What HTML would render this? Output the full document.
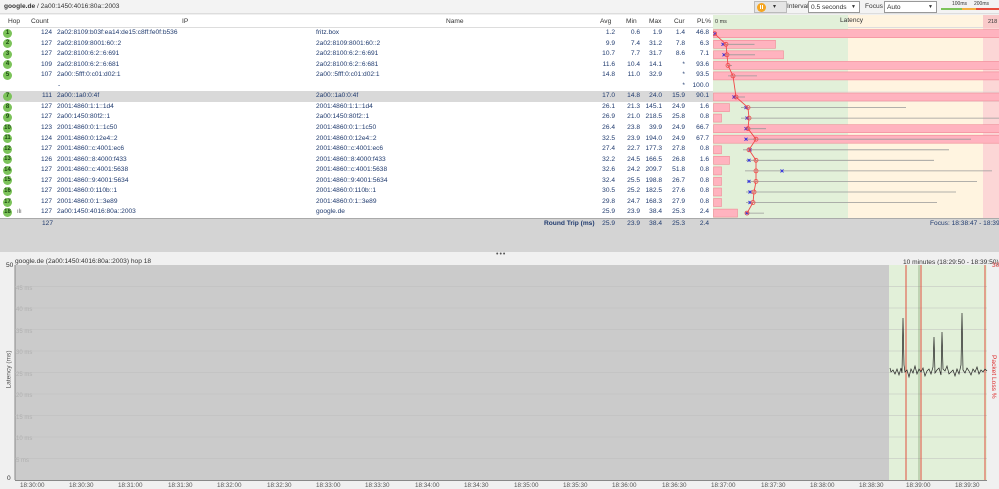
<!DOCTYPE html>
<html><head><meta charset="utf-8">
<style>
*{margin:0;padding:0;box-sizing:border-box}
body{width:999px;height:489px;overflow:hidden;background:#f0f0f0;font-family:"Liberation Sans",sans-serif;font-size:6.6px;color:#1f3a6e;position:relative}
.a{position:absolute;white-space:nowrap}
.top{left:0;top:0;width:999px;height:14px;background:#f3f3f3;border-bottom:1px solid #ddd}
.hdr{left:0;top:15px;width:713px;height:13px;background:#fff;border-bottom:1px solid #ddd;color:#333}
.hdr span{position:absolute;top:3px}
.tbl{left:0;top:28px;width:713px;height:190px;background:#fff}
.r{position:absolute;left:0;width:713px;height:10.55px;line-height:10.55px}
.r span{position:absolute}
.hop{left:3px;top:0.8px;width:9px;height:9px;border-radius:50%;background:#7cc35a;color:#1b4a10;text-align:center;line-height:9px;font-size:6px;font-weight:bold}
.n{text-align:right}
</style></head><body>
<div class="a top"></div>
<div class="a" style="left:4px;top:3px;color:#333"><b>google.de</b> / 2a00:1450:4016:80a::2003</div>
<div class="a" style="left:754px;top:1px;width:33px;height:12px;border:1px solid #bbb;background:#e5e5e5"></div>
<div class="a" style="left:757px;top:2.5px;width:9px;height:9px;border-radius:50%;background:#f5a623"></div>
<div class="a" style="left:760px;top:5px;width:1px;height:4px;background:#fff"></div><div class="a" style="left:762px;top:5px;width:1px;height:4px;background:#fff"></div>
<div class="a" style="left:773px;top:3px;font-size:6px;color:#333">▾</div>
<div class="a" style="left:787px;top:3px;color:#333">Interval</div>
<div class="a" style="left:808px;top:1px;width:52px;height:12px;border:1px solid #999;background:#fff;color:#333;padding:2px 2px">0.5 seconds<span style="position:absolute;right:3px;font-size:5px">▼</span></div>
<div class="a" style="left:865px;top:3px;color:#333">Focus</div>
<div class="a" style="left:884px;top:1px;width:53px;height:12px;border:1px solid #999;background:#fff;color:#333;padding:2px 2px">Auto<span style="position:absolute;right:3px;font-size:5px">▼</span></div>
<div class="a" style="left:952px;top:1px;font-size:5px;color:#333">100ms</div><div class="a" style="left:974px;top:1px;font-size:5px;color:#333">200ms</div>
<div class="a" style="left:941px;top:8px;width:21px;height:2px;background:#7cc35a"></div>
<div class="a" style="left:962px;top:8px;width:14px;height:2px;background:#f5b041"></div>
<div class="a" style="left:976px;top:8px;width:23px;height:2px;background:#e74c3c"></div>

<div class="a hdr"><span style="left:8px">Hop</span><span style="left:31px">Count</span><span style="left:182px">IP</span><span style="left:446px">Name</span><span style="left:600px">Avg</span><span style="left:626px">Min</span><span style="left:649px">Max</span><span style="left:674px">Cur</span><span style="left:697px">PL%</span></div>
<div class="a" style="left:713px;top:15px;width:286px;height:13px;background:#fff4e0;border-bottom:1px solid #ddd"></div>
<div class="a" style="left:713px;top:15px;width:135px;height:13px;background:#e2f0d9"></div>
<div class="a" style="left:983px;top:15px;width:16px;height:13px;background:#f9c9c9"></div>
<div class="a" style="left:715px;top:19px;font-size:5.5px;color:#333">0 ms</div>
<div class="a" style="left:840px;top:17px;color:#333">Latency</div>
<div class="a" style="left:988px;top:19px;font-size:5.5px;color:#333">218</div>

<div class="a tbl">
<div class="r" style="top:0"><span class="hop">1</span><span class="n" style="left:30px;width:22px">124</span><span style="left:57px">2a02:8109:b03f:ea14:de15:c8ff:fe0f:b536</span><span style="left:316px">fritz.box</span><span class="n" style="left:595px;width:20px">1.2</span><span class="n" style="left:620px;width:20px">0.6</span><span class="n" style="left:642px;width:20px">1.9</span><span class="n" style="left:665px;width:20px">1.4</span><span class="n" style="left:689px;width:20px">46.8</span></div>
<div class="r" style="top:10.55px"><span class="hop">2</span><span class="n" style="left:30px;width:22px">127</span><span style="left:57px">2a02:8109:8001:60::2</span><span style="left:316px">2a02:8109:8001:60::2</span><span class="n" style="left:595px;width:20px">9.9</span><span class="n" style="left:620px;width:20px">7.4</span><span class="n" style="left:642px;width:20px">31.2</span><span class="n" style="left:665px;width:20px">7.8</span><span class="n" style="left:689px;width:20px">6.3</span></div>
<div class="r" style="top:21.1px"><span class="hop">3</span><span class="n" style="left:30px;width:22px">127</span><span style="left:57px">2a02:8100:6:2::6:691</span><span style="left:316px">2a02:8100:6:2::6:691</span><span class="n" style="left:595px;width:20px">10.7</span><span class="n" style="left:620px;width:20px">7.7</span><span class="n" style="left:642px;width:20px">31.7</span><span class="n" style="left:665px;width:20px">8.6</span><span class="n" style="left:689px;width:20px">7.1</span></div>
<div class="r" style="top:31.65px"><span class="hop">4</span><span class="n" style="left:30px;width:22px">109</span><span style="left:57px">2a02:8100:6:2::6:681</span><span style="left:316px">2a02:8100:6:2::6:681</span><span class="n" style="left:595px;width:20px">11.6</span><span class="n" style="left:620px;width:20px">10.4</span><span class="n" style="left:642px;width:20px">14.1</span><span class="n" style="left:665px;width:20px">*</span><span class="n" style="left:689px;width:20px">93.6</span></div>
<div class="r" style="top:42.2px"><span class="hop">5</span><span class="n" style="left:30px;width:22px">107</span><span style="left:57px">2a00::5fff:0:c01:d02:1</span><span style="left:316px">2a00::5fff:0:c01:d02:1</span><span class="n" style="left:595px;width:20px">14.8</span><span class="n" style="left:620px;width:20px">11.0</span><span class="n" style="left:642px;width:20px">32.9</span><span class="n" style="left:665px;width:20px">*</span><span class="n" style="left:689px;width:20px">93.5</span></div>
<div class="r" style="top:52.75px"><span style="left:58px">-</span><span class="n" style="left:665px;width:20px">*</span><span class="n" style="left:689px;width:20px">100.0</span></div>
<div class="r" style="top:63.3px;background:#d9d9d9"><span class="hop">7</span><span class="n" style="left:30px;width:22px">111</span><span style="left:57px">2a00::1a0:0:4f</span><span style="left:316px">2a00::1a0:0:4f</span><span class="n" style="left:595px;width:20px">17.0</span><span class="n" style="left:620px;width:20px">14.8</span><span class="n" style="left:642px;width:20px">24.0</span><span class="n" style="left:665px;width:20px">15.9</span><span class="n" style="left:689px;width:20px">90.1</span></div>
<div class="r" style="top:73.85px"><span class="hop">8</span><span class="n" style="left:30px;width:22px">127</span><span style="left:57px">2001:4860:1:1::1d4</span><span style="left:316px">2001:4860:1:1::1d4</span><span class="n" style="left:595px;width:20px">26.1</span><span class="n" style="left:620px;width:20px">21.3</span><span class="n" style="left:642px;width:20px">145.1</span><span class="n" style="left:665px;width:20px">24.9</span><span class="n" style="left:689px;width:20px">1.6</span></div>
<div class="r" style="top:84.4px"><span class="hop">9</span><span class="n" style="left:30px;width:22px">127</span><span style="left:57px">2a00:1450:80f2::1</span><span style="left:316px">2a00:1450:80f2::1</span><span class="n" style="left:595px;width:20px">26.9</span><span class="n" style="left:620px;width:20px">21.0</span><span class="n" style="left:642px;width:20px">218.5</span><span class="n" style="left:665px;width:20px">25.8</span><span class="n" style="left:689px;width:20px">0.8</span></div>
<div class="r" style="top:94.95px"><span class="hop">10</span><span class="n" style="left:30px;width:22px">123</span><span style="left:57px">2001:4860:0:1::1c50</span><span style="left:316px">2001:4860:0:1::1c50</span><span class="n" style="left:595px;width:20px">26.4</span><span class="n" style="left:620px;width:20px">23.8</span><span class="n" style="left:642px;width:20px">39.9</span><span class="n" style="left:665px;width:20px">24.9</span><span class="n" style="left:689px;width:20px">66.7</span></div>
<div class="r" style="top:105.5px"><span class="hop">11</span><span class="n" style="left:30px;width:22px">124</span><span style="left:57px">2001:4860:0:12e4::2</span><span style="left:316px">2001:4860:0:12e4::2</span><span class="n" style="left:595px;width:20px">32.5</span><span class="n" style="left:620px;width:20px">23.9</span><span class="n" style="left:642px;width:20px">194.0</span><span class="n" style="left:665px;width:20px">24.9</span><span class="n" style="left:689px;width:20px">67.7</span></div>
<div class="r" style="top:116.05px"><span class="hop">12</span><span class="n" style="left:30px;width:22px">127</span><span style="left:57px">2001:4860::c:4001:ec6</span><span style="left:316px">2001:4860::c:4001:ec6</span><span class="n" style="left:595px;width:20px">27.4</span><span class="n" style="left:620px;width:20px">22.7</span><span class="n" style="left:642px;width:20px">177.3</span><span class="n" style="left:665px;width:20px">27.8</span><span class="n" style="left:689px;width:20px">0.8</span></div>
<div class="r" style="top:126.6px"><span class="hop">13</span><span class="n" style="left:30px;width:22px">126</span><span style="left:57px">2001:4860::8:4000:f433</span><span style="left:316px">2001:4860::8:4000:f433</span><span class="n" style="left:595px;width:20px">32.2</span><span class="n" style="left:620px;width:20px">24.5</span><span class="n" style="left:642px;width:20px">166.5</span><span class="n" style="left:665px;width:20px">26.8</span><span class="n" style="left:689px;width:20px">1.6</span></div>
<div class="r" style="top:137.15px"><span class="hop">14</span><span class="n" style="left:30px;width:22px">127</span><span style="left:57px">2001:4860::c:4001:5638</span><span style="left:316px">2001:4860::c:4001:5638</span><span class="n" style="left:595px;width:20px">32.6</span><span class="n" style="left:620px;width:20px">24.2</span><span class="n" style="left:642px;width:20px">209.7</span><span class="n" style="left:665px;width:20px">51.8</span><span class="n" style="left:689px;width:20px">0.8</span></div>
<div class="r" style="top:147.7px"><span class="hop">15</span><span class="n" style="left:30px;width:22px">127</span><span style="left:57px">2001:4860::9:4001:5634</span><span style="left:316px">2001:4860::9:4001:5634</span><span class="n" style="left:595px;width:20px">32.4</span><span class="n" style="left:620px;width:20px">25.5</span><span class="n" style="left:642px;width:20px">198.8</span><span class="n" style="left:665px;width:20px">26.7</span><span class="n" style="left:689px;width:20px">0.8</span></div>
<div class="r" style="top:158.25px"><span class="hop">16</span><span class="n" style="left:30px;width:22px">127</span><span style="left:57px">2001:4860:0:110b::1</span><span style="left:316px">2001:4860:0:110b::1</span><span class="n" style="left:595px;width:20px">30.5</span><span class="n" style="left:620px;width:20px">25.2</span><span class="n" style="left:642px;width:20px">182.5</span><span class="n" style="left:665px;width:20px">27.6</span><span class="n" style="left:689px;width:20px">0.8</span></div>
<div class="r" style="top:168.8px"><span class="hop">17</span><span class="n" style="left:30px;width:22px">127</span><span style="left:57px">2001:4860:0:1::3e89</span><span style="left:316px">2001:4860:0:1::3e89</span><span class="n" style="left:595px;width:20px">29.8</span><span class="n" style="left:620px;width:20px">24.7</span><span class="n" style="left:642px;width:20px">168.3</span><span class="n" style="left:665px;width:20px">27.9</span><span class="n" style="left:689px;width:20px">0.8</span></div>
<div class="r" style="top:179.35px"><span class="hop">18</span><span style="left:17px;color:#555;font-size:6px">ılı</span><span class="n" style="left:30px;width:22px">127</span><span style="left:57px">2a00:1450:4016:80a::2003</span><span style="left:316px">google.de</span><span class="n" style="left:595px;width:20px">25.9</span><span class="n" style="left:620px;width:20px">23.9</span><span class="n" style="left:642px;width:20px">38.4</span><span class="n" style="left:665px;width:20px">25.3</span><span class="n" style="left:689px;width:20px">2.4</span></div>
</div>

<svg class="a" style="left:713px;top:28px" width="286" height="190" viewBox="713 28 286 190">
<rect x="713" y="28" width="135" height="190" fill="#e2f0d9"/>
<rect x="848" y="28" width="135" height="190" fill="#fff4e0"/>
<rect x="983" y="28" width="16" height="190" fill="#fcd6d6"/>
<rect x="713" y="91.3" width="286" height="10.55" fill="#d9d9d9" opacity=".5"/>
<g fill="#ffb3bf" stroke="#f08a96" stroke-width=".6">
<rect x="713.5" y="29.7" width="290" height="8"/>
<rect x="713.5" y="40.3" width="62" height="8"/>
<rect x="713.5" y="50.8" width="70" height="8"/>
<rect x="713.5" y="61.4" width="290" height="8"/>
<rect x="713.5" y="71.9" width="290" height="8"/>
<rect x="713.5" y="93" width="290" height="8"/>
<rect x="713.5" y="103.6" width="16" height="8"/>
<rect x="713.5" y="114.1" width="8" height="8"/>
<rect x="713.5" y="124.7" width="290" height="8"/>
<rect x="713.5" y="135.2" width="290" height="8"/>
<rect x="713.5" y="145.8" width="8" height="8"/>
<rect x="713.5" y="156.3" width="16" height="8"/>
<rect x="713.5" y="166.9" width="8" height="8"/>
<rect x="713.5" y="177.4" width="8" height="8"/>
<rect x="713.5" y="188" width="8" height="8"/>
<rect x="713.5" y="198.5" width="8" height="8"/>
<rect x="713.5" y="209.1" width="24" height="8"/>
</g>
<g stroke="#999" stroke-width=".8">
<line x1="723" y1="44.3" x2="754.5" y2="44.3"/><line x1="723" y1="54.8" x2="755" y2="54.8"/>
<line x1="727" y1="65.4" x2="732" y2="65.4"/><line x1="728" y1="75.9" x2="757" y2="75.9"/>
<line x1="733" y1="97" x2="745" y2="97"/><line x1="741" y1="107.6" x2="906" y2="107.6"/>
<line x1="741" y1="118.1" x2="999" y2="118.1"/><line x1="745" y1="128.7" x2="766" y2="128.7"/>
<line x1="745" y1="139.2" x2="971" y2="139.2"/><line x1="743" y1="149.8" x2="949" y2="149.8"/>
<line x1="746" y1="160.3" x2="934" y2="160.3"/><line x1="745" y1="170.9" x2="992" y2="170.9"/>
<line x1="747" y1="181.4" x2="977" y2="181.4"/><line x1="746" y1="192" x2="956" y2="192"/>
<line x1="746" y1="202.5" x2="937" y2="202.5"/><line x1="745" y1="213.1" x2="764" y2="213.1"/>
</g>
<g stroke="#2a2ae0" stroke-width=".9">
<path d="M713.5 32.2l3 3m0-3l-3 3M721.5 42.8l3 3m0-3l-3 3M722.5 53.3l3 3m0-3l-3 3M732.5 95.5l3 3m0-3l-3 3M744.5 106.1l3 3m0-3l-3 3M745.5 116.6l3 3m0-3l-3 3M744.5 127.2l3 3m0-3l-3 3M744.5 137.7l3 3m0-3l-3 3M748.5 148.3l3 3m0-3l-3 3M747.5 158.8l3 3m0-3l-3 3M780.5 169.4l3 3m0-3l-3 3M747.5 179.9l3 3m0-3l-3 3M748.5 190.5l3 3m0-3l-3 3M748.5 201l3 3m0-3l-3 3M745.5 211.6l3 3m0-3l-3 3"/>
</g>
<polyline fill="none" stroke="#f04848" stroke-width=".9" points="714.6,33.7 726,44.3 727,54.8 728,65.4 733,75.9 736,97 748,107.6 749,118.1 748,128.7 756,139.2 749,149.8 756,160.3 756,170.9 756,181.4 754,192 753,202.5 747,213.1"/>
<g fill="none" stroke="#f04848" stroke-width=".8">
<circle cx="714.6" cy="33.7" r="2"/><circle cx="726" cy="44.3" r="2"/><circle cx="727" cy="54.8" r="2"/><circle cx="728" cy="65.4" r="2"/><circle cx="733" cy="75.9" r="2"/><circle cx="736" cy="97" r="2"/><circle cx="748" cy="107.6" r="2"/><circle cx="749" cy="118.1" r="2"/><circle cx="748" cy="128.7" r="2"/><circle cx="756" cy="139.2" r="2"/><circle cx="749" cy="149.8" r="2"/><circle cx="756" cy="160.3" r="2"/><circle cx="756" cy="170.9" r="2"/><circle cx="756" cy="181.4" r="2"/><circle cx="754" cy="192" r="2"/><circle cx="753" cy="202.5" r="2"/><circle cx="747" cy="213.1" r="2"/>
</g>
</svg>

<div class="a" style="left:0;top:218px;width:999px;height:34px;background:#d4d4d4;border-top:1px solid #aaa"></div>
<div class="a" style="left:42px;top:220px">127</div>
<div class="a" style="left:544px;top:220px;font-weight:bold">Round Trip (ms)</div>
<div class="a" style="left:595px;top:220px;width:20px;text-align:right">25.9</div>
<div class="a" style="left:620px;top:220px;width:20px;text-align:right">23.9</div>
<div class="a" style="left:642px;top:220px;width:20px;text-align:right">38.4</div>
<div class="a" style="left:665px;top:220px;width:20px;text-align:right">25.3</div>
<div class="a" style="left:689px;top:220px;width:20px;text-align:right">2.4</div>
<div class="a" style="left:930px;top:220px">Focus: 18:38:47 - 18:39:5</div>
<div class="a" style="left:496px;top:251px;color:#555;font-size:7px;letter-spacing:1px">•••</div>

<div class="a" style="left:15px;top:258px;color:#333">google.de (2a00:1450:4016:80a::2003) hop 18</div>
<div class="a" style="left:903px;top:258px;color:#333">10 minutes (18:29:50 - 18:39:50) ⌄</div>
<div class="a" style="left:6px;top:262px;color:#333">50</div>
<div class="a" style="left:7px;top:475px;color:#333">0</div>
<div class="a" style="left:992px;top:262px;color:#d33">30</div>
<div class="a" style="left:-10px;top:366px;transform:rotate(-90deg);color:#555">Latency (ms)</div>
<div class="a" style="left:990px;top:355px;writing-mode:vertical-rl;color:#d33">Packet Loss %</div>

<svg class="a" style="left:0;top:262px" width="999" height="227" viewBox="0 262 999 227">
<rect x="15" y="265" width="972" height="215" fill="#cbcbcb"/>
<rect x="889" y="265" width="98" height="215" fill="#e2f0d9"/>
<line x1="15" y1="265" x2="15" y2="480" stroke="#888"/>
<line x1="15" y1="480.5" x2="987" y2="480.5" stroke="#888"/>
<g stroke="#bdbdbd" stroke-width=".6">
<line x1="15" y1="286.5" x2="987" y2="286.5"/><line x1="15" y1="308" x2="987" y2="308"/><line x1="15" y1="329.5" x2="987" y2="329.5"/><line x1="15" y1="351" x2="987" y2="351"/><line x1="15" y1="372.5" x2="987" y2="372.5"/><line x1="15" y1="394" x2="987" y2="394"/><line x1="15" y1="415.5" x2="987" y2="415.5"/><line x1="15" y1="437" x2="987" y2="437"/><line x1="15" y1="458.5" x2="987" y2="458.5"/>
</g>
<g font-family="Liberation Sans" font-size="6" fill="#b0b0b0">
<text x="16" y="290">45 ms</text><text x="16" y="311">40 ms</text><text x="16" y="333">35 ms</text><text x="16" y="354">30 ms</text><text x="16" y="376">25 ms</text><text x="16" y="397">20 ms</text><text x="16" y="419">15 ms</text><text x="16" y="440">10 ms</text><text x="16" y="462">5 ms</text>
</g>
<g stroke="#e05040" stroke-width="1"><line x1="906" y1="265" x2="906" y2="480"/><line x1="921" y1="265" x2="921" y2="480"/><line x1="985" y1="265" x2="985" y2="480"/></g>
<line x1="919" y1="265" x2="919" y2="480" stroke="#6b8f5a" stroke-width=".6"/>
<polyline fill="none" stroke="#222" stroke-width=".7" points="890,368 891,372 893,370 895,374 897,369 899,375 901,368 902,373 903,318 904,365 905,372 907,370 909,377 911,369 913,373 915,366 917,374 919,369 921,372 923,368 925,376 927,371 929,369 931,374 933,367 934,337 935,373 937,370 939,368 941,375 942,332 943,369 945,371 947,366 949,374 951,372 953,370 955,376 957,369 959,374 961,365 962,313 963,370 965,373 967,368 969,371 971,375 973,369 975,372 977,367 979,374 981,370 983,372 985,369 987,371"/>
<g font-family="Liberation Sans" font-size="6.3" fill="#555">
<text x="20" y="487">18:30:00</text><text x="69" y="487">18:30:30</text><text x="118" y="487">18:31:00</text><text x="168" y="487">18:31:30</text><text x="217" y="487">18:32:00</text><text x="267" y="487">18:32:30</text><text x="316" y="487">18:33:00</text><text x="365" y="487">18:33:30</text><text x="415" y="487">18:34:00</text><text x="464" y="487">18:34:30</text><text x="514" y="487">18:35:00</text><text x="563" y="487">18:35:30</text><text x="612" y="487">18:36:00</text><text x="662" y="487">18:36:30</text><text x="711" y="487">18:37:00</text><text x="761" y="487">18:37:30</text><text x="810" y="487">18:38:00</text><text x="859" y="487">18:38:30</text><text x="906" y="487">18:39:00</text><text x="955" y="487">18:39:30</text>
</g>
</svg>
</body></html>
